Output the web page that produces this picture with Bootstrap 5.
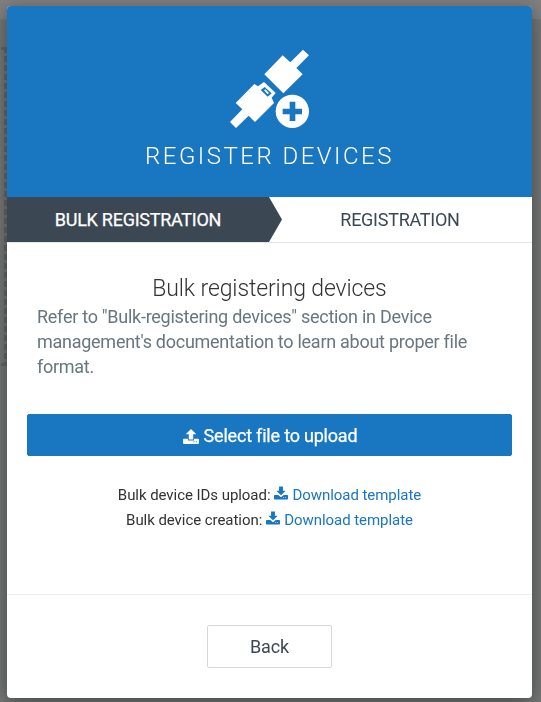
<!DOCTYPE html>
<html lang="en">
<head>
<meta charset="utf-8">
<meta name="viewport" content="width=device-width, initial-scale=1">
<title>Register devices</title>
<link href="https://cdn.jsdelivr.net/npm/bootstrap@5.3.0/dist/css/bootstrap.min.css" rel="stylesheet">
<style>
:root{--brand:#1976c1;--slate:#3b4853}
body{font-family:Roboto,sans-serif;background:linear-gradient(#808080 19px,#747675 19px);height:702px;overflow:hidden;color:#333;font-size:15px;line-height:25px}
.drop-edge{position:absolute;left:1px;top:47px;width:6px;height:319px;background:linear-gradient(#626564,#626564) 0 0/6px 3px no-repeat,linear-gradient(#626564,#626564) 0 100%/6px 3px no-repeat,repeating-linear-gradient(#626564 0 6px,transparent 6px 9px) 3px 0/3px 100% no-repeat}
.wizard{width:525px;height:692px;margin:6px 0 0 7px;border:0;border-radius:4px;overflow:hidden}
.wizard-shadow{height:698px;filter:drop-shadow(0 4px 9px rgba(0,0,0,.4))}
.wizard-head{height:191px;background:var(--brand);color:#fff;padding-top:34px}
.wizard-head svg{display:block;margin-left:213px}
.wizard-title{font-size:24px;font-weight:300;letter-spacing:2.48px;line-height:30px;margin:6px 0 0}
.steps{height:46px;border-bottom:1px solid #e4e5e6;font-size:18px;line-height:45px;letter-spacing:-.26px}
.step-now{width:275px;padding-right:13px;background:var(--slate);color:#fff;clip-path:polygon(0 0,262px 0,100% 50%,262px 100%,0 100%);-webkit-text-stroke:.25px #fff}
.step-next{padding-right:14px;color:var(--slate)}
.wizard-body{height:351px;padding:33px 20px 0}
.body-title{font-size:23px;font-weight:300;line-height:25px;letter-spacing:-.12px;margin:0}
.hint{font-size:18px;line-height:25px;letter-spacing:-.265px;color:#68767f;padding:0 10px;margin:3px 0 35px}
.btn-send{--bs-btn-bg:var(--brand);--bs-btn-color:#fff;--bs-btn-border-color:var(--brand);height:42px;padding-top:8px;border-radius:2px;font-size:18px;line-height:24px;letter-spacing:-.2px;-webkit-text-stroke:.25px #fff}
.templates{margin-top:27px;letter-spacing:-.055px}
.templates a{color:var(--brand);text-decoration:none}
.templates svg{margin-top:3px}
.wizard-foot{height:104px;border-top:1px solid #ededee;padding-top:30px}
.btn-back{width:125px;height:43px;border:1px solid #d5d7d9;border-radius:2px;font-size:18px;letter-spacing:-.2px;color:var(--slate)}
</style>
<script src="https://cdn.jsdelivr.net/npm/bootstrap@5.3.0/dist/js/bootstrap.bundle.min.js"></script>
</head>
<body>
<svg class="d-none">
  <symbol id="up" viewBox="0 0 18 17"><path d="M9 0l6 6h-3.500v6h-5v-6H3z"/><path fill-rule="evenodd" d="M1 11h4.500v2h7v-2H17q1 0 1 1v4q0 1-1 1H1q-1 0-1-1v-4q0-1 1-1zM12 14v1h1v-1zm2.500 0v1h1v-1z"/></symbol>
  <symbol id="down" viewBox="0 0 18 17"><path d="M9 11.500l6-6h-3.500V0h-5v5.500H3z"/><path fill-rule="evenodd" d="M1 11h4.500L9 14l3.500-3H17q1 0 1 1v4q0 1-1 1H1q-1 0-1-1v-4q0-1 1-1zM12 14v1h1v-1zm2.500 0v1h1v-1z"/></symbol>
</svg>
<div class="drop-edge"></div>
<div class="wizard-shadow">
<main class="wizard card">
  <header class="wizard-head text-center">
    <svg width="100" height="95" viewBox="0 0 300 285" fill="#fff">
      <path d="M133 103l55-57 23 21 38-38 18 17-38 38 19 19-58 57z"/>
      <path d="M47 189L103 132 114 139 132 126 167 159 155 173 162 189 105 246 86 227 48 264 30 246 67 208z"/>
      <path fill="#1976c1" d="M122 150l12-9 21 19-12 10z"/>
      <path d="M132 151l4-3 11 11-4 4z"/>
      <circle cx="217" cy="214" r="50"/>
      <path fill="#1976c1" d="M209 185h17v21h20v17h-20v20h-17v-20h-21v-17h21z"/>
    </svg>
    <h1 class="wizard-title">REGISTER DEVICES</h1>
  </header>
  <nav class="steps d-flex text-center">
    <div class="step-now">BULK REGISTRATION</div>
    <div class="step-next flex-grow-1">REGISTRATION</div>
  </nav>
  <section class="wizard-body text-center">
    <h2 class="body-title">Bulk registering devices</h2>
    <p class="hint text-start">Refer to "Bulk-registering devices" section in Device management's documentation to learn about proper file format.</p>
    <button class="btn btn-send w-100 d-flex align-items-center justify-content-center gap-1"><svg width="18" height="15" fill="currentColor"><use href="#up"/></svg>Select file to upload</button>
    <div class="templates">
      <div class="d-flex justify-content-center gap-1">Bulk device IDs upload: <a href="#" class="d-flex gap-1"><svg width="14" height="14" fill="currentColor"><use href="#down"/></svg>Download template</a></div>
      <div class="d-flex justify-content-center gap-1">Bulk device creation: <a href="#" class="d-flex gap-1"><svg width="14" height="14" fill="currentColor"><use href="#down"/></svg>Download template</a></div>
    </div>
  </section>
  <footer class="wizard-foot text-center"><button class="btn btn-back">Back</button></footer>
</main>
</div>
</body>
</html>
